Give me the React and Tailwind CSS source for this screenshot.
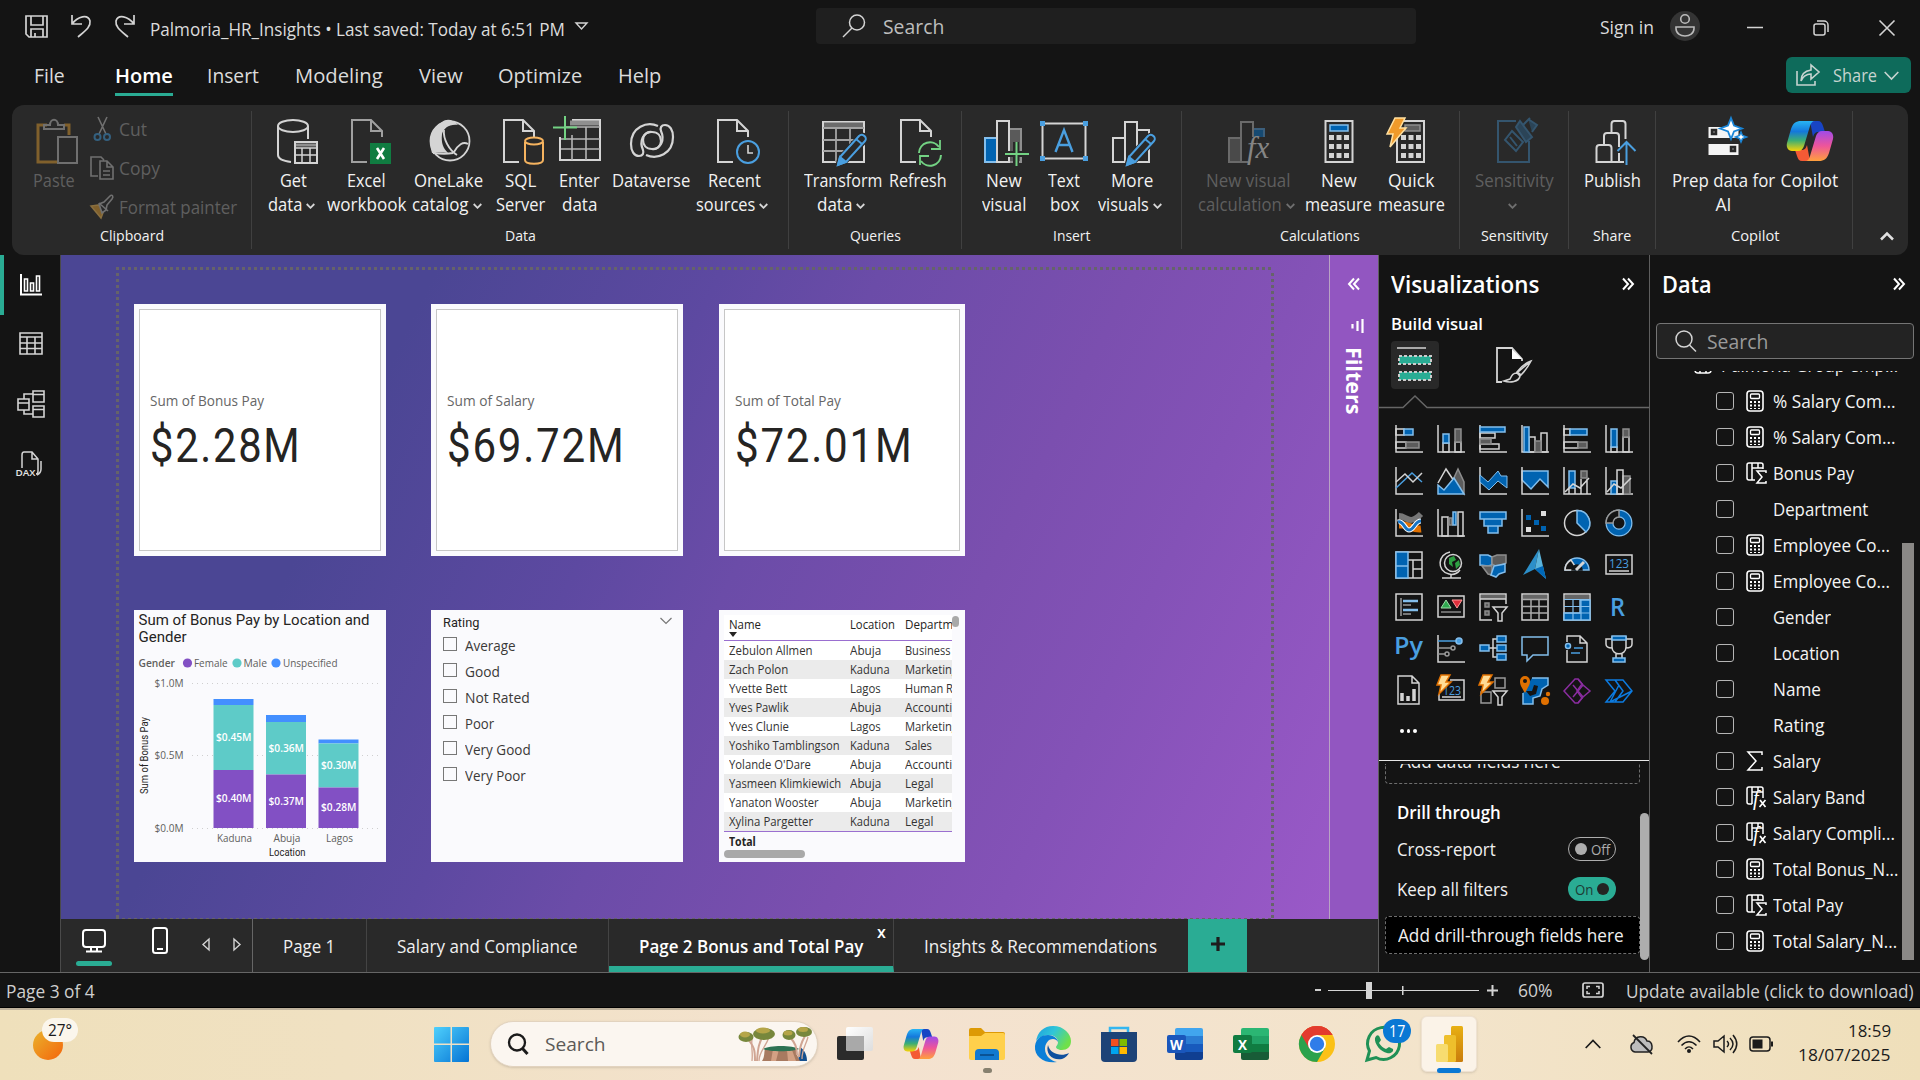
import React, { useLayoutEffect, useRef, useState } from "react";

/* ---------- text fitted to a measure ---------- */
function T({ w, className = "", children }) {
  const ref = useRef(null);
  const [k, setK] = useState(1);
  useLayoutEffect(() => {
    if (w && ref.current) setK(w / ref.current.offsetWidth);
  }, [w, children]);
  return (
    <span className={"block shrink-0 whitespace-nowrap " + className} style={w ? { width: w } : undefined}>
      <span ref={ref} className="inline-block origin-left" style={{ transform: `scaleX(${k})` }}>
        {children}
      </span>
    </span>
  );
}

const L = "#d4d4d4";
const G = "#8f8f8f";
const B = "#0063b1";
const LB = "#83beec";
const SB = "#4a9fe0";
const GR = "#73d283";

function Svg({ w = 48, h = 48, vb, className = "", children }) {
  return (
    <svg width={w} height={h} viewBox={vb || `0 0 ${w} ${h}`} fill="none" stroke={L} strokeWidth="2" className={"block shrink-0 overflow-visible " + className}>
      {children}
    </svg>
  );
}

function Chev({ className = "text-[#d6d6d6]" }) {
  return (
    <svg width="9" height="6" viewBox="0 0 9 6" fill="none" stroke="currentColor" strokeWidth="1.8" className={"mt-1 block shrink-0 " + className}>
      <path d="M.7 1l3.8 3.8L8.3 1" />
    </svg>
  );
}

/* ---------- ribbon icons ---------- */
const Page = ({ x = 8 }) => (
  <g transform={`translate(${x} 0)`}>
    <path d="M15 45H0V3h19l11 11v6" />
    <path d="M19 3v11h11" />
  </g>
);

const CopilotMark = ({ id }) => (
  <g stroke="none">
    <defs>
      <linearGradient id={id + "a"} x1="0" y1="0" x2="0" y2="1">
        <stop offset="0" stopColor="#28b4f4" />
        <stop offset=".35" stopColor="#1478dc" />
        <stop offset=".65" stopColor="#3cae74" />
        <stop offset="1" stopColor="#f7d306" />
      </linearGradient>
      <linearGradient id={id + "b"} x1="0" y1="0" x2="0" y2="1">
        <stop offset="0" stopColor="#a04be8" />
        <stop offset=".5" stopColor="#ee559a" />
        <stop offset="1" stopColor="#ffa03c" />
      </linearGradient>
    </defs>
    <path d="M24 4h8c3 0 4 2 5 5l2 6h-6c-4 0-5 2-6 5z" fill="#1844c4" />
    <path d="M24 44h-8c-3 0-4-2-5-5l-2-6h6c4 0 5-2 6-5z" fill="#f45a35" />
    <path d="M15 4h14c-3 0-4 2-5 5l-6 20c-1 3-3 5-6 5H6c-4 0-6-4-5-8l4-14c2-6 5-8 10-8z" fill={`url(#${id}a)`} />
    <path d="M33 44H19c3 0 4-2 5-5l6-20c1-3 3-5 6-5h6c4 0 6 4 5 8l-4 14c-2 6-5 8-10 8z" fill={`url(#${id}b)`} />
  </g>
);

const Pencil = () => (
  <g>
    <path d="M21 41L41 19c3-3 8 1 5 5L26 45l-7 3z" fill="#292929" stroke="#292929" strokeWidth="5" />
    <path d="M21 40L40 19c3-3 9 1 6 5L27 45l-8 3z" stroke={SB} fill="#292929" />
    <path d="M21 40l6 5-8 3zM37 22l6 5" stroke={SB} fill={SB} />
  </g>
);

const Swirl = () => (
  <path d="M31 9C20 4 4 10 4 27c0 7 3 12 8 12 4 0 5-3 4-6-4-9 0-18 9-18 6 0 9 4 9 9s-4 9-9 8" strokeWidth="2.2" />
);

const icons = {
  getData: (
    <Svg>
      <ellipse cx="23" cy="9" rx="15" ry="6" />
      <path d="M8 9v29c0 4 5 6 13 7M38 9v13" />
      <path d="M25 25h22v21H25z" />
      <path d="M26 28h20" stroke={G} strokeWidth="3" />
      <path d="M25 31h22M25 38h22M32 31v15M40 31v15" strokeWidth="1.5" />
    </Svg>
  ),
  excel: (
    <Svg>
      <g stroke="#a0a0a0"><Page x={9} /></g>
      <path d="M27 26h21v21H27z" fill="#107c41" stroke="none" />
      <path d="M34 31l7 11M41 31l-7 11" stroke="#fff" strokeWidth="2.6" />
    </Svg>
  ),
  onelake: (
    <Svg>
      <circle cx="25" cy="24" r="19.5" strokeWidth="1.8" />
      <path d="M17 5c5-4 12-2 16 3-9-1-14 3-16 9-1 9 1 14 6 19-9-1-16 0-16 0C3 23 6 11 17 5z" fill={L} stroke="none" />
      <path d="M19 13c-1 9 5 20 13 25M29 35c4-7 9-11 14-8M8 36c8 1 15 1 20 0" strokeWidth="1.8" />
    </Svg>
  ),
  sql: (
    <Svg>
      <Page x={8} />
      <path d="M29 25v18c0 5 18 5 18 0V25" stroke="#f5b35f" fill="#292929" />
      <ellipse cx="38" cy="24" rx="9" ry="3.6" stroke="#f5b35f" fill="#292929" />
    </Svg>
  ),
  enter: (
    <Svg>
      <path d="M4 20v23h40V3H16" />
      <path d="M14 6h29" stroke={G} strokeWidth="5" />
      <path d="M5 22h39M5 32h39M16 18v25M30 10v33M10 10h34" stroke="#b4b4b4" strokeWidth="1.6" />
      <path d="M9-1v24M-3 10.5h24" stroke={GR} />
    </Svg>
  ),
  dataverse: (
    <Svg>
      <Swirl />
      <g transform="rotate(180 25 23.5)"><Swirl /></g>
    </Svg>
  ),
  recent: (
    <Svg>
      <Page x={8} />
      <circle cx="38" cy="35" r="11" stroke={SB} fill="#292929" />
      <path d="M38 28v8h5" stroke={L} strokeWidth="1.6" />
    </Svg>
  ),
  transform: (
    <Svg>
      <path d="M4 5h41v40H4z" />
      <path d="M5 8h39" stroke="#6b6b6b" strokeWidth="5" />
      <path d="M4 11h41M17 11v34M31 11v26M4 23h38M4 34h24" stroke="#a3a3a3" strokeWidth="1.8" />
      <Pencil />
    </Svg>
  ),
  refresh: (
    <Svg>
      <Page x={7} />
      <g stroke={GR}>
        <path d="M25 36a11 11 0 0 1 20-6M47 38a11 11 0 0 1-20 6" />
        <path d="M46 23v9h-9M26 48v-9h9" strokeWidth="1.8" />
      </g>
    </Svg>
  ),
  newVisual: (
    <Svg>
      <path d="M29 12h12v33H29z" fill="#5a5a5a" stroke={G} />
      <path d="M5 21h12v24H5z" fill={B} stroke={LB} />
      <path d="M17 4h12v41H17z" fill="#292929" />
      <path d="M36 25v24M25 37h24" stroke="#292929" strokeWidth="6" />
      <path d="M36.500 25v24M25 37h24" stroke={GR} />
    </Svg>
  ),
  textBox: (
    <Svg>
      <path d="M2.500 6.500h43v35h-43z" />
      <g fill={SB} stroke="none">
        <path d="M0 4h5v5H0zM43 4h5v5h-5zM0 39h5v5H0zM43 39h5v5h-5z" />
      </g>
      <path d="M15.500 35L24 13l8.500 22M18.500 28h11" stroke={SB} strokeWidth="2.4" />
    </Svg>
  ),
  moreVisuals: (
    <Svg>
      <path d="M5 21h12v24H5zM17 5h12v40H17zM29 13h12v32H29z" />
      <Pencil />
    </Svg>
  ),
  visualCalc: (
    <Svg>
      <path d="M29 12h11v12H29z" fill="#164a72" stroke="#3c5f7c" />
      <path d="M5 21h12v24H5z" fill="#4a4a4a" stroke="#6a6a6a" />
      <path d="M17 5h12v40H17z" fill="#292929" stroke="#6a6a6a" />
      <path d="M24 20h20v28H24z" fill="#292929" stroke="none" />
      <text x="23" y="41" fill="#858585" stroke="none" fontSize="31" fontStyle="italic" fontFamily="Liberation Serif">fx</text>
    </Svg>
  ),
  newMeasure: (
    <Svg>
      <path d="M10.500 4h27v41h-27z" />
      <path d="M15 8h18v6H15z" fill={B} stroke={LB} strokeWidth="1.500" />
      <g fill={L} stroke="none">
        <path d="M14 18h5v5h-5zM21.500 18h5v5h-5zM29 18h5v5h-5zM14 27h5v5h-5zM21.500 27h5v5h-5zM29 27h5v5h-5zM14 36h5v5h-5zM21.500 36h5v5h-5zM29 36h5v5h-5z" />
      </g>
    </Svg>
  ),
  quickMeasure: (
    <Svg>
      <path d="M10 4h27v41H10z" />
      <path d="M18 8h15v6H18z" fill="#5f5f5f" stroke={G} strokeWidth="1.500" />
      <g fill={L} stroke="none">
        <path d="M14 18h5v5h-5zM21.500 18h5v5h-5zM29 18h5v5h-5zM14 27h5v5h-5zM21.500 27h5v5h-5zM29 27h5v5h-5zM14 36h5v5h-5zM21.500 36h5v5h-5zM29 36h5v5h-5z" />
      </g>
      <path d="M8 1h10l-5 10h6L3 30l3-13H0z" fill="#f09a2a" stroke="#ffe0a0" strokeWidth="1.500" />
    </Svg>
  ),
  sensitivity: (
    <Svg>
      <g stroke="#34556e">
        <path d="M26 4H8v41h31V24" />
        <path d="M22 14l11 11-7 9-11-11zM20 20l7 9" />
        <path d="M30 4l12 16-6 5-10-15zM38 2l9 6-5 7M33 8l7-7" fill="#2b4457" />
      </g>
    </Svg>
  ),
  publish: (
    <Svg>
      <path d="M8.500 31a3 3 0 0 1 3-3h9a3 3 0 0 1 3 3v14h-15zM16 28V19a3 3 0 0 1 3-3h9a3 3 0 0 1 3 3v11M23.500 16V7a3 3 0 0 1 3-3h8a3 3 0 0 1 3 3v15M23 45h13M31 36v9" />
      <path d="M38.500 48V26M29.500 34l9-9 9 9" stroke={SB} />
    </Svg>
  ),
  prep: (
    <Svg>
      <path d="M8.500 10h30v11h-30zM8.500 27h30v11h-30z" fill="#f4f4f4" stroke="none" />
      <path d="M12 13h4v4h-4zM31 30h4v4h-4z" stroke="#292929" strokeWidth="2.5" fill="#888" />
      <path d="M31 1l3 7.500 8 3-8 3-3 7.500-3-7.500-8-3 8-3z" fill="#fff" stroke="#1a86d8" strokeWidth="1.800" />
      <path d="M41 15l1.500 3.500 4 1.500-4 1.500L41 25l-1.500-3.500-4-1.500 4-1.500z" fill="#fff" stroke="#1a86d8" strokeWidth="1.500" />
    </Svg>
  ),
  copilot: (
    <Svg>
      <CopilotMark id="rc" />
    </Svg>
  ),
};

const groups = [
  { name: "Data", nw: 31, box: "w-[537px] pl-[10px]", nudge: "-translate-x-[5px]", items: [
    { i: "getData", c: "w-[63px]", a: ["Get", 27], b: ["data", 34], v: 1 },
    { i: "excel", c: "w-[83px]", a: ["Excel", 39], b: ["workbook", 79] },
    { i: "onelake", c: "w-[81px]", a: ["OneLake", 69], b: ["catalog", 57], v: 1 },
    { i: "sql", c: "w-[62px]", a: ["SQL", 31], b: ["Server", 49] },
    { i: "enter", c: "w-[57px]", a: ["Enter", 41], b: ["data", 35] },
    { i: "dataverse", c: "w-[86px]", a: ["Dataverse", 78] },
    { i: "recent", c: "w-[80px]", a: ["Recent", 53], b: ["sources", 59], v: 1 },
  ] },
  { name: "Queries", nw: 51, box: "w-[173px] pl-[10px]", nudge: "-translate-x-[5px]", items: [
    { i: "transform", c: "w-[88px]", a: ["Transform", 78], b: ["data", 35], v: 1 },
    { i: "refresh", c: "w-[61px]", a: ["Refresh", 58] },
  ] },
  { name: "Insert", nw: 37, box: "w-[220px] pl-[12px]", nudge: "-translate-x-1.5", items: [
    { i: "newVisual", c: "w-[60px]", a: ["New", 36], b: ["visual", 44] },
    { i: "textBox", c: "w-[60px]", a: ["Text", 32], b: ["box", 29] },
    { i: "moreVisuals", c: "w-[76px]", a: ["More", 42], b: ["visuals", 51], v: 1 },
  ] },
  { name: "Calculations", nw: 80, box: "w-[278px] pl-[13px]", nudge: "-translate-x-[7px]", items: [
    { i: "visualCalc", c: "w-[106px] text-[#5f5f5f]", a: ["New visual", 84], b: ["calculation", 84], v: 1, dim: 1 },
    { i: "newMeasure", c: "w-[75px]", a: ["New", 36], b: ["measure", 67] },
    { i: "quickMeasure", c: "w-[70px]", a: ["Quick", 46], b: ["measure", 67] },
  ] },
  { name: "Sensitivity", nw: 67, box: "w-[109px]", nudge: "", items: [
    { i: "sensitivity", c: "w-[108px] text-[#5f5f5f]", a: ["Sensitivity", 79], v: 1, dim: 1 },
  ] },
  { name: "Share", nw: 38, box: "w-[87px]", nudge: "", items: [{ i: "publish", c: "w-[86px]", a: ["Publish", 57] }] },
  { name: "Copilot", nw: 49, box: "w-[197px] pl-[14px]", nudge: "-translate-x-1.5", items: [
    { i: "prep", c: "w-[107px]", a: ["Prep data for", 103], b: ["AI", 16] },
    { i: "copilot", c: "w-[65px]", a: ["Copilot", 58] },
  ] },
];

function Ribbon() {
  return (
    <div className="mx-3 flex h-[150px] rounded-xl bg-[#292929] py-1.5 text-[17.500px] leading-6 text-[#f2f2f2]">
      <div className="flex w-[240px] shrink-0 flex-col border-r border-[#404040]">
        <div className="flex h-[112px] text-[#5f5f5f]">
          <div className="ml-[21px] flex w-[44px] flex-col pt-1.5">
            <Svg className="ml-1">
              <path d="M10 6H1v37h20M27 6h5v10" stroke="#80602c" strokeWidth="3" transform="translate(0 2)" />
              <path d="M7 12V8h6c0-7 8-7 8 0h6v4z" stroke="#707070" />
              <path d="M21 20h19v26H21z" stroke="#707070" />
            </Svg>
            <T w={42} className="mt-[3px]">Paste</T>
          </div>
          <div className="ml-[13px] flex flex-col gap-[15px] pt-1.5">
            <div className="flex h-6 items-center gap-[5px]">
              <Svg w={24} h={24}>
                <path d="M8 0l8 17M17 0L9 17" stroke="#707070" strokeWidth="1.600" />
                <circle cx="7.500" cy="20" r="3" stroke="#34607f" /><circle cx="17" cy="20" r="3" stroke="#34607f" />
              </Svg>
              <T w={28}>Cut</T>
            </div>
            <div className="flex h-6 items-center gap-[5px]">
              <Svg w={24} h={24}>
                <g stroke="#707070" strokeWidth="1.600"><path d="M8 20H1V1h10l3 3M10 5h7l6 6v12H10zM17 5v6h6M13 15h7M13 19h7" /></g>
              </Svg>
              <T w={41}>Copy</T>
            </div>
            <div className="flex h-6 items-center gap-[5px]">
              <Svg w={24} h={24}>
                <path d="M1 11l10 12 3-8-6-5z" fill="#80602c" stroke="#8a7040" strokeWidth="1.500" />
                <path d="M9 8l9 8M9 9l5-2 6-6c2-2 4 0 2 3l-5 6-1 5-4 3z" stroke="#707070" strokeWidth="1.600" fill="#292929" />
              </Svg>
              <T w={118}>Format painter</T>
            </div>
          </div>
        </div>
        <T w={64} className="mx-auto text-[15px]">Clipboard</T>
      </div>
      {groups.map((g) => (
        <div key={g.name} className={"flex shrink-0 flex-col border-r border-[#404040] " + g.box}>
          <div className="flex h-[112px] pt-1.5">
            {g.items.map((t) => (
              <div key={t.i} className={"flex shrink-0 flex-col items-center " + t.c}>
                {icons[t.i]}
                <T w={t.a[1]} className="mt-[3px]">{t.a[0]}</T>
                <div className={"flex h-6 items-center gap-1 " + (t.v ? "mr-[4px]" : "")}>
                  {t.b && <T w={t.b[1]}>{t.b[0]}</T>}
                  {t.v && <Chev className={t.dim ? "text-[#6f6f6f]" : "text-[#d6d6d6]"} />}
                </div>
              </div>
            ))}
          </div>
          <T w={g.nw} className={"mx-auto text-[15px] " + g.nudge}>{g.name}</T>
        </div>
      ))}
      <div className="flex flex-1 items-end justify-center pb-2">
        <svg width="16" height="10" viewBox="0 0 16 10" fill="none" stroke="#e0e0e0" strokeWidth="2.500" className="ml-3"><path d="M2 8.500l6-6 6 6" /></svg>
      </div>
    </div>
  );
}

function TitleBar() {
  return (
    <div className="flex h-[52px] text-[17.500px] leading-[58px] text-[#dcdcdc]">
      <div className="flex h-[52px] w-[816px] shrink-0 items-center pl-[25px]">
        <Svg w={23} h={23} className=""><path d="M1 1h21v21H4l-3-3zM6 1v9h12V1M6 22v-8h12v8M10 22v-4" strokeWidth="1.700" /></Svg>
        <Svg w={22} h={24} className="ml-[22px]"><path d="M2 1v9h10M2 10C8 2 18 0 20 7c1 6-5 10-12 16" strokeWidth="1.700" /></Svg>
        <Svg w={22} h={24} className="ml-[22px]"><path d="M20 1v9H10M20 10C14 2 4 0 2 7c-1 6 5 10 12 16" strokeWidth="1.700" /></Svg>
        <T w={415} className="ml-[14px] mt-1.5">Palmoria_HR_Insights • Last saved: Today at 6:51 PM</T>
        <Svg w={13} h={8} className="ml-[10px]"><path d="M1 1h11L6.500 7z" strokeWidth="1.400" /></Svg>
      </div>
      <div className="mt-2 flex h-9 w-[600px] shrink-0 items-center rounded bg-[#1f1f1f] pl-[26px] text-xl text-[#bdbdbd]">
        <Svg w={24} h={24}><circle cx="15" cy="8.500" r="7.500" strokeWidth="1.500" /><path d="M10 14L1 23" strokeWidth="1.500" /></Svg>
        <T w={61} className="ml-[17px] mt-0.5">Search</T>
      </div>
      <div className="flex h-[52px] items-center">
        <T w={54} className="ml-[184px] mt-0.5">Sign in</T>
        <div className="ml-4 flex size-[30px] items-center justify-center rounded-full bg-[#343434]">
          <Svg w={20} h={24}><circle cx="10" cy="5" r="4.300" strokeWidth="1.600" stroke="#bbb" /><path d="M1 13h18v1.500c0 10-18 10-18 0z" stroke="#bbb" strokeWidth="1.600" /></Svg>
        </div>
        <Svg w={16} h={16} className="ml-[47px] mt-1"><path d="M0 7.500h16" strokeWidth="1.500" /></Svg>
        <Svg w={16} h={16} className="ml-[50px] mt-1"><path d="M1 6a2 2 0 0 1 2-2h7a2 2 0 0 1 2 2v7a2 2 0 0 1-2 2H3a2 2 0 0 1-2-2zM4 1h7a4 4 0 0 1 4 4v7" strokeWidth="1.500" /></Svg>
        <Svg w={16} h={16} className="ml-[50px] mt-1"><path d="M.5.5l15 15M15.500.5l-15 15" strokeWidth="1.600" /></Svg>
      </div>
    </div>
  );
}

function Menu() {
  return (
    <div className="flex h-[53px] text-xl leading-[48px] text-[#dcdcdc]">
      <T w={31} className="ml-[34px]">File</T>
      <div className="ml-[50px] h-[44px] border-b-[3px] border-[#2aac94]">
        <T w={58} className="font-semibold text-white">Home</T>
      </div>
      <T w={52} className="ml-[34px]">Insert</T>
      <T w={88} className="ml-[36px]">Modeling</T>
      <T w={44} className="ml-[36px]">View</T>
      <T w={84} className="ml-[35px]">Optimize</T>
      <T w={43} className="ml-[36px]">Help</T>
      <div className="ml-auto mr-[9px] mt-[5px] flex h-9 w-[125px] items-center rounded-md bg-[#0e6b5b] pl-2.5 text-[17.500px] text-[#c6d4d0]">
        <Svg w={24} h={22} className="text-white"><path d="M1 7v14h18v-4M15 6V1l8 7-8 7v-5c-5 0-8 2-10 7 0-6 3-10 10-11z" strokeWidth="1.600" stroke="#c6d4d0" /></Svg>
        <T w={44} className="ml-[13px]">Share</T>
        <Svg w={15} h={9} className="ml-[7px]"><path d="M.7 1l6.800 7L14.300 1" strokeWidth="1.600" stroke="#c6d4d0" /></Svg>
      </div>
    </div>
  );
}

function Rail() {
  return (
    <div className="w-[61px] shrink-0 border-r border-[#4a4a4a]">
      <div className="flex h-[60px] items-center border-l-4 border-[#2aac94] pl-4">
        <Svg w={22} h={22} ><path d="M1 0v20.500h21" stroke="#fff" /><path d="M4.500 5h3v12h-3zM10.500 9h3v8h-3zM16.500 2h3v15h-3z" strokeWidth="1.600" stroke="#fff" /></Svg>
      </div>
      <Svg w={24} h={24} className="ml-[19px] mt-[17px]"><path d="M1 1h22v21H1zM1 5h22M1 11h22M1 16.500h22M8 5v17M16 5v17" strokeWidth="1.600" /></Svg>
      <Svg w={28} h={28} className="ml-[17px] mt-[34px]"><path d="M1 9h11v11H1zM1 13h11M16 1h11v11H16zM16 4.500h11M16 16h11v11H16zM16 19.500h11M7 9V4h9M7 20v4h9" strokeWidth="1.600" /></Svg>
      <Svg w={27} h={26} className="ml-[16px] mt-[33px]">
        <path d="M6 17V4c0-2 1-3 2-3h8l6 7v12c0 2-1 3-2 3M16 1v7h6M25 10v8c0 3-2 5-4 6" strokeWidth="1.500" />
        <text x="-0.500" y="25" fill="#e4e4e4" stroke="none" fontSize="9.500" fontWeight="600" textLength="20" lengthAdjust="spacingAndGlyphs">DAX</text>
      </Svg>
    </div>
  );
}

function Card({ label, lw, value, vw }) {
  return (
    <div className="h-[252px] bg-[#fafafd] p-[5px]">
      <div className="h-full border border-[#c6c6c6] bg-white pl-[10px] pt-[81px]">
        <T w={lw} className="text-[14.500px] leading-5 text-[#666]">{label}</T>
        <T w={vw} className="mt-2 font-[Roboto] text-[48px] leading-[54px] tracking-[2px] text-[#252423]">{value}</T>
      </div>
    </div>
  );
}

const bars = [
  { n: "Kaduna", x: 79.5, t: [89, 95, 160], up: "$0.45M", lo: "$0.40M", uy: 128, ly: 189, w: 35 },
  { n: "Abuja", x: 132, t: [105, 112, 164.5], up: "$0.36M", lo: "$0.37M", uy: 139, ly: 192, w: 27 },
  { n: "Lagos", x: 184.5, t: [129.5, 133.5, 177.5], up: "$0.30M", lo: "$0.28M", uy: 156, ly: 198, w: 27 },
];

function Chart() {
  const st = { textLength: 0, lengthAdjust: "spacingAndGlyphs" };
  return (
    <div className="h-[252px] bg-[#fafafd]">
      <svg width="252" height="252" viewBox="0 0 252 252" className="block" fontSize="11.500" fill="#605e5c">
        <g className="font-[Roboto]" fill="#252423" fontSize="15">
          <text x="4.500" y="15" {...st} textLength="231">Sum of Bonus Pay by Location and</text>
          <text x="4.500" y="32" {...st} textLength="48">Gender</text>
          <text x="135" y="246" fontSize="10.500" {...st} textLength="36.500">Location</text>
          <text transform="translate(14 184) rotate(-90)" fontSize="10.500" {...st} textLength="77">Sum of Bonus Pay</text>
        </g>
        <text x="4.500" y="57" fontWeight="600" {...st} textLength="36.500">Gender</text>
        <circle cx="53.500" cy="53" r="4.600" fill="#8250c4" />
        <text x="60" y="57" {...st} textLength="33.500">Female</text>
        <circle cx="103" cy="53" r="4.600" fill="#5ecbc8" />
        <text x="109.500" y="57" {...st} textLength="23.500">Male</text>
        <circle cx="142" cy="53" r="4.600" fill="#438fff" />
        <text x="149" y="57" {...st} textLength="54.500">Unspecified</text>
        <text x="20.500" y="77" {...st} textLength="29">$1.0M</text>
        <text x="20.500" y="149" {...st} textLength="29">$0.5M</text>
        <text x="20.500" y="221.500" {...st} textLength="29">$0.0M</text>
        <path d="M58 73.500h187M58 145.500h187M58 218.500h187" stroke="#cfcfcf" strokeWidth="1" strokeDasharray="1 4" />
        {bars.map((b) => (
          <g key={b.n}>
            <rect x={b.x} y={b.t[0]} width="40" height={b.t[1] - b.t[0]} fill="#438fff" />
            <rect x={b.x} y={b.t[1]} width="40" height={b.t[2] - b.t[1]} fill="#5ecbc8" />
            <rect x={b.x} y={b.t[2]} width="40" height={218 - b.t[2]} fill="#8250c4" />
            <g fill="#fff" fontWeight="600" fontSize="11">
              <text x={b.x + 2.5} y={b.uy + 3} {...st} textLength="35.500">{b.up}</text>
              <text x={b.x + 2.5} y={b.ly + 3} {...st} textLength="35.500">{b.lo}</text>
            </g>
            <text x={b.x + 21 - b.w / 2} y="232" {...st} textLength={b.w}>{b.n}</text>
          </g>
        ))}
      </svg>
    </div>
  );
}

const ratings = [["Average", 51], ["Good", 35], ["Not Rated", 65], ["Poor", 29], ["Very Good", 66], ["Very Poor", 61]];

function Slicer() {
  return (
    <div className="h-[252px] bg-[#fafafd] pl-3 text-[#3a3938]">
      <div className="flex h-[27px] items-center justify-between pr-[11px]">
        <T w={36} className="-mt-[3px] font-[Roboto] text-[13.500px] text-[#252423]">Rating</T>
        <Svg w={12} h={8} className="-mt-1.5"><path d="M.5 1L6 6.500 11.500 1" stroke="#777" strokeWidth="1.200" /></Svg>
      </div>
      {ratings.map(([n, w]) => (
        <div key={n} className="mb-0.5 flex h-6 items-center gap-[8px] text-[14.500px]">
          <div className="-mt-2.5 size-[14px] border border-[#777]" />
          <T w={w} className="-mt-1.5">{n}</T>
        </div>
      ))}
    </div>
  );
}

const people = [
  ["Zebulon Allmen", 84, "Abuja", 31, "Business", 45],
  ["Zach Polon", 59, "Kaduna", 40, "Marketing", 53],
  ["Yvette Bett", 58, "Lagos", 31, "Human Resources", 94],
  ["Yves Pawlik", 60, "Abuja", 31, "Accounting", 61],
  ["Yves Clunie", 60, "Lagos", 31, "Marketing", 53],
  ["Yoshiko Tamblingson", 111, "Kaduna", 40, "Sales", 27],
  ["Yolande O'Dare", 82, "Abuja", 31, "Accounting", 61],
  ["Yasmeen Klimkiewich", 112, "Abuja", 31, "Legal", 28],
  ["Yanaton Wooster", 90, "Abuja", 31, "Marketing", 53],
  ["Xylina Pargetter", 84, "Kaduna", 40, "Legal", 28],
];

function TableCard() {
  return (
    <div className="flex h-[252px] bg-[#fafafd] pl-[5px] pt-[5px] text-[12.500px] text-[#333]">
      <div className="w-[228px] overflow-hidden">
        <div className="h-[26px] border-b border-[#9a6fd0] bg-white pl-[5px] text-[#252423]">
          <div className="flex h-[20px] items-center">
            <T w={32} className="mr-[89px]">Name</T>
            <T w={45} className="mr-[10px]">Location</T>
            <T w={66}>Department</T>
          </div>
          <svg width="8" height="5" className="-mt-[3px] block"><path d="M0 0h8L4 5z" fill="#252423" /></svg>
        </div>
        {people.map((p, i) => (
          <div key={p[0]} className={"flex h-[19px] items-center pl-[5px] pt-px " + (i % 2 ? "bg-[#ebebeb]" : "bg-white")}>
            <div className="w-[121px] shrink-0"><T w={p[1]}>{p[0]}</T></div>
            <div className="w-[55px] shrink-0"><T w={p[3]}>{p[2]}</T></div>
            <T w={p[5]}>{p[4]}</T>
          </div>
        ))}
        <div className="h-[19px] border-t border-[#9a6fd0] pl-[5px] leading-5"><T w={27} className="font-bold text-[#252423]">Total</T></div>
        <div className="h-2 w-[81px] rounded-full bg-[#a9a9a9]" />
      </div>
      <div className="mt-px h-[11px] w-[7px] rounded-full bg-[#a9a9a9]" />
    </div>
  );
}

function Canvas() {
  return (
    <div className="flex h-[664px]">
      <div className="flex w-[1269px] shrink-0 flex-col overflow-hidden border-r border-[#b9a3c4] bg-[linear-gradient(116deg,#4b4694_0%,#4b4694_24%,#5d49a1_42%,#6b4ca8_52%,#7b4faf_68%,#8452b7_79%,#9a59c8_100%)]">
        <div className="ml-[55px] mt-[12px] flex h-[652px] w-[1158px] flex-col">
          <div className="h-[3px] shrink-0 bg-[repeating-linear-gradient(90deg,#66636a_0_3px,transparent_3px_6px)]" />
          <div className="flex h-[648px] shrink-0">
            <div className="w-[3px] shrink-0 bg-[repeating-linear-gradient(0deg,#66636a_0_3px,transparent_3px_6px)]" />
            <div className="ml-[15px] mt-[34px] grid h-[559px] w-[1137px] grid-cols-[252px_252px_246px] grid-rows-[252px_252px] content-start gap-y-[54px]">
              <Card label="Sum of Bonus Pay" lw={114} value="$2.28M" vw={151} />
              <div className="-mr-[45px] ml-[45px]"><Card label="Sum of Salary" lw={87} value="$69.72M" vw={178} /></div>
              <div className="-mr-[81px] ml-[81px]"><Card label="Sum of Total Pay" lw={106} value="$72.01M" vw={178} /></div>
              <Chart />
              <div className="-mr-[45px] ml-[45px]"><Slicer /></div>
              <div className="-mr-[81px] ml-[81px]"><TableCard /></div>
            </div>
            <div className="w-[3px] shrink-0 bg-[repeating-linear-gradient(0deg,#66636a_0_3px,transparent_3px_6px)]" />
          </div>
          <div className="h-px shrink-0 bg-[repeating-linear-gradient(90deg,#66636a_0_3px,transparent_3px_6px)]" />
        </div>
      </div>
      <div className="flex w-[48px] flex-col items-center bg-[#9256c1] pt-[23px] text-white">
        <Svg w={12} h={12}><path d="M6 .5L1 6l5 5.500M11 .5L6 6l5 5.500" stroke="#fff" strokeWidth="2" /></Svg>
        <Svg w={14} h={14} className="ml-1.5 mt-[29px]"><path d="M12.500 0v14M7.500 2v10M2.500 5v4.500" stroke="#fff" strokeWidth="2.200" /></Svg>
        <div className="mt-[14px] w-6 text-[21.500px] font-bold leading-6 [writing-mode:vertical-rl]">Filters</div>
      </div>
    </div>
  );
}

function TabBar() {
  return (
    <div className="flex h-[53px] bg-[#292929] text-[17.500px] leading-[54px] text-[#f0f0f0]">
      <div className="flex w-[192px] shrink-0 items-start border-r border-[#666]">
        <div className="ml-[15px] mt-[10px] flex w-9 flex-col items-center">
          <Svg w={24} h={24}><rect x="1" y="1" width="22" height="17" rx="3" stroke="#fff" /><path d="M9 19v3M15 19v3M4 22.500h16" stroke="#fff" /></Svg>
          <div className="mt-2 h-[5px] w-9 rounded-full bg-[#2aac94]" />
        </div>
        <Svg w={16} h={27} className="ml-[40px] mt-2"><rect x="1" y="1" width="14" height="25" rx="2.500" stroke="#fff" /><path d="M5 22h6" stroke="#fff" /></Svg>
        <Svg w={8} h={13} className="ml-[34px] mt-[19px]"><path d="M7 1v11L1 6.500z" strokeWidth="1.400" /></Svg>
        <Svg w={8} h={13} className="ml-[23px] mt-[19px]"><path d="M1 1v11l6-5.500z" strokeWidth="1.400" /></Svg>
      </div>
      <div className="flex w-[114px] shrink-0 border-r border-[#444] pl-[30px]"><T w={52}>Page 1</T></div>
      <div className="flex w-[242px] shrink-0 border-r border-[#444] pl-[30px]"><T w={181}>Salary and Compliance</T></div>
      <div className="flex w-[285px] shrink-0 border-b-[6px] border-r border-b-[#2aac94] border-r-[#444] pl-[30px] font-semibold text-white">
        <T w={224}>Page 2 Bonus and Total Pay</T>
        <T w={9} className="ml-[14px] h-6 text-base leading-[26px]">x</T>
      </div>
      <div className="flex w-[294px] shrink-0 pl-[30px]"><T w={233}>Insights &amp; Recommendations</T></div>
      <div className="flex w-[59px] items-center justify-center bg-[#2aac94]">
        <Svg w={14} h={14} className="-mt-1"><path d="M7 0v14M0 7h14" stroke="#1d1d1d" strokeWidth="3.200" /></Svg>
      </div>
    </div>
  );
}

/* ---------- visual gallery ---------- */
const Ax = () => <path d="M1 0v27h27" strokeWidth="1.500" />;
const bl = { fill: B, stroke: LB };
const gy = { fill: "#5c5c5c", stroke: "#8d8d8d" };
const Bolt = () => <path d="M4-2h9L9 5h5L2 17l2-9H0z" fill="#ffdc96" stroke="#e07000" strokeWidth="1.500" />;
const Funnel = () => <path d="M14 14h14l-5 6v8h-4v-8z" fill="#141414" />;
const gallery = [
  <><Ax /><path d="M1 4h8v6H1zM1 17h10v6H1z" /><path d="M9 4h9v6H9z" {...bl} /><path d="M11 17h13v6H11z" {...gy} /></>,
  <><Ax /><path d="M6 18h6v9H6zM18 17h6v10h-6z" /><path d="M6 9h6v9H6z" {...bl} /><path d="M18 4h6v13h-6z" {...gy} /></>,
  <><Ax /><path d="M1 8h15v5H1zM1 19h19v5H1z" /><path d="M1 14h11v5H1z" {...gy} /><path d="M1 2h25v5H1z" {...bl} /></>,
  <><Ax /><path d="M8 12h6v15H8zM20 8h6v19h-6z" /><path d="M14 16h6v11h-6z" {...gy} /><path d="M3 2h5v25H3z" {...bl} /></>,
  <><Ax /><path d="M1 4h6v6H1zM1 17h14v6H1z" /><path d="M7 4h17v6H7z" {...bl} /><path d="M15 17h9v6h-9z" {...gy} /></>,
  <><Ax /><path d="M6 22h6v5H6zM18 12h6v15h-6z" /><path d="M6 4h6v18H6z" {...bl} /><path d="M18 4h6v8h-6z" {...gy} /></>,
  <><Ax /><path d="M1 21L17 6l10 9" stroke={SB} /><path d="M1 15L10 7l8 8 9-9" /></>,
  <><path d="M15 15l6-13 6 13v12z" {...gy} /><path d="M1 16L9 2l8 12" /><path d="M1 27V18l6 5L17 11l10 16z" {...bl} /></>,
  <><Ax /><path d="M1 8l8 7L19 4l3 5h6v12l-9-7-9 9-9-8z" {...bl} strokeWidth="1" /></>,
  <><path d="M1 4h26v16l-8-8-9 10-9-9z" {...bl} /><Ax /></>,
  <><Ax /><path d="M6 4h6v17H6z" {...bl} /><path d="M18 4h6v7h-6z" {...gy} /><path d="M6 21v6M12 21v6M18 12v15M24 12v15M2 25l8-8 7 4 9-10" /></>,
  <><Ax /><path d="M6 14h6v13H6z" {...bl} /><path d="M18 9h7v18h-7z" {...gy} /><path d="M12 3h6v24h-6z" /><path d="M2 25l7-8 7 4 10-10" /></>,
  <><Ax /><path d="M4 16h6c4 0 8 5 16 4" stroke="#e07000" strokeWidth="7" /><path d="M4 7c8 0 10 10 22-2" stroke="#777" strokeWidth="6" /><path d="M3 13c5-2 7 8 11 8 5 0 6-9 12-9" stroke="#fff" strokeWidth="5" /><path d="M3 13c5-2 7 8 11 8 5 0 6-9 12-9" stroke="#1674c4" strokeWidth="3" /></>,
  <><Ax /><path d="M5 8h6v19H5zM21 3h5v24h-5z" /><path d="M12 9h3v7h-3z" {...gy} /><path d="M16 3h3v13h-3z" {...bl} /></>,
  <><path d="M1 3h26v7H1zM5 10h18v7H5zM9 17h10v7H9z" {...bl} /></>,
  <><Ax /><g stroke="none"><path d="M5 6h5v5H5zM13 11h5v5h-5zM20 17h5v5h-5z" fill={B} /><path d="M20 2h5v5h-5zM5 18h5v5H5z" fill="#ddd" /></g></>,
  <><circle cx="14" cy="14" r="12.500" /><path d="M14 1.500a12.500 12.500 0 0 1 9 21.500l-9-9z" {...bl} /></>,
  <><circle cx="14" cy="14" r="9.500" stroke={LB} strokeWidth="8" /><circle cx="14" cy="14" r="9.500" stroke={B} strokeWidth="5.500" /><path d="M1 14A13 13 0 0 1 14 1v7a6 6 0 0 0-6 6z" fill="#141414" stroke="#999" /></>,
  <><path d="M1 1h26v26H1zM13 9h14M18 9v18M18 18h9" /><path d="M1 1h12v14H1zM1 15h12v12H1z" {...bl} /></>,
  <><circle cx="16" cy="12" r="8.500" /><path d="M12 7l5-2 2 4-4 2 1 5-4-3zM18 12l4-3 1 5-4 4z" fill="#2ea043" stroke="none" /><path d="M13 1C1 3-1 20 12 23c4 1 8 0 11-4M14 24v3M5 27h19" /></>,
  <><path d="M1 4h8l4 2v8l-4 1-8-1z" {...bl} /><path d="M13 6l5-2h9v8l-9 4-5-3zM3 15l10 0v9l-4-1z" {...gy} /><path d="M15 15l11-2v8l-6 2-3 3-5-2z" {...bl} /></>,
  <g stroke="none"><path d="M18-2L2 24l12-6z" fill="#2c8fc9" /><path d="M18-2l-4 20 11 10z" fill="#5bb4dc" /><path d="M14 18l11 10-3-13z" fill="#0068b8" /></g>,
  <><path d="M2 19a12 12 0 0 1 24 0z" fill={B} stroke={LB} /><path d="M2 19A12 12 0 0 1 8 9l4 6-2 4z" fill="#141414" /><path d="M9 19a5 5 0 0 1 10 0z" fill="#141414" stroke="#141414" /><path d="M13 19l8-8" strokeWidth="3" /></>,
  <><path d="M1 4h26v19H1zM4 20h20" /><text x="4" y="17" fill={SB} stroke="none" fontSize="13.500" textLength="20" lengthAdjust="spacingAndGlyphs">123</text></>,
  <><path d="M1 1h26v26H1z" /><path d="M6 5v18M8 12h8M8 21h8" stroke="#999" /><path d="M8 8h15M8 17h15" stroke={LB} strokeWidth="2.500" /></>,
  <><path d="M1 3h26v21H1z" /><path d="M4 19h20" stroke="#888" /><path d="M4 15l5-8 5 8z" fill="#2fa84f" stroke="#9fe0a8" strokeWidth="1" /><path d="M15 7h10l-5 8z" fill="#e0303c" stroke="#ff9a9a" strokeWidth="1" /></>,
  <><path d="M13 27H1V1h26v10" /><path d="M2 4h24" stroke="#666" strokeWidth="4" /><path d="M1 6h26" /><path d="M6 10h4v4H6zM6 18h4v4H6z" {...gy} /><Funnel /></>,
  <><path d="M1 1h26v26H1z" /><path d="M2 4h24" stroke="#666" strokeWidth="4" /><path d="M1 6.500h26M1 13.500h26M1 20h26M10 7v20M18 7v20" stroke="#aaa" /></>,
  <><path d="M1 1h26v26H1z" /><path d="M17 7h10v20H1v-7h16z" fill={B} stroke={LB} /><path d="M2 4h24" stroke="#666" strokeWidth="4" /><path d="M1 6.500h26M1 13.500h26M1 20h26M10 7v20M18 7v20" stroke={LB} strokeWidth="1.200" /></>,
  <text x="5" y="23" fill={SB} stroke="none" fontSize="25" fontWeight="600" textLength="15" lengthAdjust="spacingAndGlyphs">R</text>,
  <text x="-1" y="19" fill={SB} stroke="none" fontSize="24" fontWeight="600" textLength="29" lengthAdjust="spacingAndGlyphs">Py</text>,
  <><Ax /><path d="M1 6h19" stroke={SB} /><circle cx="22" cy="6" r="3" fill={SB} stroke={LB} /><path d="M1 13h13M1 19h7" stroke="#999" /><circle cx="16" cy="13" r="2" stroke="#999" /><circle cx="10" cy="19" r="2" stroke="#999" /></>,
  <><path d="M10 13h8M18 4h-4v18h4" /><path d="M1 10h9v6H1zM18 1h9v6h-9zM18 10h9v6h-9zM18 19h9v6h-9z" {...bl} /></>,
  <path d="M1 2h26v18H12l-6 6v-6H1z" stroke={LB} />,
  <><path d="M4 7V1h13l7 7v19H4V15M17 1v7h7" /><circle cx="5" cy="11" r="2.500" fill={B} stroke={LB} /><path d="M11 13h9M8 18h9" stroke={SB} /></>,
  <><path d="M7 2h14v10c0 9-14 9-14 0zM7 4H1v5c0 3 3 4 6 4M21 4h6v5c0 3-3 4-6 4M11 18v5M17 18v5" /><path d="M7 1h14v4H7zM8 23h12v4H8z" {...bl} /></>,
  <><path d="M3-1h14l7 7v21H3zM17-1v7h7" /><path d="M7 24v-8M13 24v-5M19 24V12" strokeWidth="3.500" /></>,
  <><path d="M13 3h14v20H2v-6M5 20h19" /><text x="6" y="18" fill={SB} stroke="none" fontSize="13" textLength="18" lengthAdjust="spacingAndGlyphs">123</text><Bolt /></>,
  <><path d="M16 1h10v10H16zM2 15h10v11H2z" stroke="#999" /><Funnel /><Bolt /></>,
  <><path d="M11 1h16v7l-6 4-2 7-7 2v6H2V16" fill={B} stroke={LB} /><path d="M5 14h6l2-6 4 1-2 8-6 2z" fill="#141414" stroke="none" /><g fill="#e07000" stroke="none"><path d="M4 16C0 9-1 8-1 4a5 5 0 0 1 10 0c0 4-2 6-5 12z" /><circle cx="24" cy="24" r="4" /><circle cx="27" cy="17" r="2.200" /></g><circle cx="4" cy="4" r="2" fill="#141414" stroke="none" /></>,
  <g stroke="#8a2da0" strokeWidth="1.500"><path d="M12 2h3l4 5-5 7 5 7-4 5h-3L1 14z" /><path d="M15 2l5 6 7 6-7 6-5 6M10 8l5 6-5 6M20 8l-5 6 5 6" /></g>,
  <><path d="M1 3h17l9 11-9 11H1l9-11zM10 3l8 11-8 11M27 14L5 25M14 8L5 25" stroke="#0c7be0" strokeWidth="1.500" /></>,
];

function Toggle({ on }) {
  return on ? (
    <div className="flex h-6 w-12 items-center rounded-full bg-[#2aac94] pl-[7px] text-[14px] text-[#1d3b35]">
      <T w={18}>On</T><div className="ml-1 size-3 rounded-full bg-[#242424]" />
    </div>
  ) : (
    <div className="flex h-6 w-12 items-center rounded-full border border-[#adadad] pl-1.5 text-[14px] text-[#adadad]">
      <div className="mr-1 size-3 rounded-full bg-[#adadad]" /><T w={19}>Off</T>
    </div>
  );
}

function VizPane() {
  return (
    <div className="flex h-[717px] w-[272px] shrink-0 flex-col border-x border-[#5e5e5e] text-[17.500px] text-[#f0f0f0]">
      <div className="flex h-[58px] items-center justify-between pl-3 pr-[15px]">
        <T w={148} className="text-[23px] font-semibold text-white">Visualizations</T>
        <Svg w={12} h={12}><path d="M1 .5L6 6l-5 5.500M6 .5L11 6l-5 5.500" stroke="#fff" strokeWidth="2" /></Svg>
      </div>
      <div className="flex h-[28px] items-center pl-3 text-[17px] font-semibold leading-6 text-white"><T w={92} className="-mt-1.5">Build visual</T></div>
      <div className="flex h-12 pl-3">
        <div className="size-12 rounded bg-[#292929] p-1.5">
          <Svg w={36} h={36}><path d="M0 1h29" strokeWidth="1.500" /><path d="M2 10h32v8H2zM2 26h32v8H2z" fill="#2aac94" strokeDasharray="3 2" strokeWidth="2" stroke="#ccc" transform="translate(0 -1)" /></Svg>
        </div>
        <Svg w={36} h={36} className="ml-[57px] mt-1.5"><path d="M6 35H1V1h15l10 11v2" strokeWidth="1.800" /><path d="M16 2v10h10z" fill="#fff" stroke="none" /><path d="M35 14L22 25M35 14c-3 6-7 11-10 14l-4-3c3-4 8-9 14-11zM21 26c-4 0-5 2-7 6l-6 2c6 2 15 1 16-5z" strokeWidth="1.600" /></Svg>
      </div>
      <svg width="270" height="20" viewBox="0 0 270 20" fill="none" stroke="#666" strokeWidth="1.500" className="block shrink-0"><path d="M0 18.500h24L36 7l12 11.500h222" /></svg>
      <div className="ml-4 mt-4 grid auto-rows-[42px] grid-cols-[repeat(6,42px)]">
        {gallery.map((g, i) => (
          <Svg key={i} w={28} h={28}><g strokeWidth="1.500">{g}</g></Svg>
        ))}
      </div>
      <div className="ml-[21px] mt-[10px] flex h-[31px] gap-[3px]">
        <div className="size-[3.500px] rounded-full bg-white" /><div className="size-[3.500px] rounded-full bg-white" /><div className="size-[3.500px] rounded-full bg-white" />
      </div>
      <div className="flex flex-1 border-t border-[#e8e8e8] pt-[3px]">
        <div className="w-[261px] overflow-hidden pl-[6px]">
          <div className="h-5 overflow-hidden rounded-b border border-t-0 border-dashed border-[#6e6e6e] pl-[14px]">
            <T w={161} className="-mt-[15px] h-5 leading-6">Add data fields here</T>
          </div>
          <div className="pl-[12px]">
            <T w={104} className="mt-[16px] font-semibold leading-6 text-white">Drill through</T>
            <div className="mt-[13px] flex h-6 items-center justify-between pr-6"><T w={99}>Cross-report</T><Toggle /></div>
            <div className="mt-4 flex h-6 items-center justify-between pr-6"><T w={111}>Keep all filters</T><Toggle on /></div>
          </div>
          <div className="mt-[15px] flex h-[38px] items-center rounded border border-dashed border-[#6e6e6e] bg-black pl-[12px]"><T w={226}>Add drill-through fields here</T></div>
        </div>
        <div className="mt-[49px] h-[147px] w-[9px] rounded-full bg-[#adadad]" />
      </div>
    </div>
  );
}

const fields = [
  ["c", "% Salary Com...", 122], ["c", "% Salary Com...", 122], ["s", "Bonus Pay", 81], ["", "Department", 95],
  ["c", "Employee Co...", 117], ["c", "Employee Co...", 117], ["", "Gender", 58], ["", "Location", 67],
  ["", "Name", 48], ["", "Rating", 51], ["m", "Salary", 47], ["f", "Salary Band", 92],
  ["f", "Salary Compli...", 122], ["c", "Total Bonus_N...", 125], ["s", "Total Pay", 70], ["c", "Total Salary_N...", 124],
];

function FieldIcon({ k }) {
  if (k === "c")
    return <Svg w={18} h={22}><rect x="1" y="1" width="16" height="20" rx="3" stroke="#fff" strokeWidth="1.600" /><rect x="4.500" y="4" width="9" height="4.500" rx="1" stroke="#fff" strokeWidth="1.300" /><g fill="#fff" stroke="none"><path d="M4 11h2v2H4zM8 11h2v2H8zM12 11h2v2h-2zM4 14.500h2v2H4zM8 14.500h2v2H8zM12 14.500h2v2h-2z" /><path d="M4 18h2v1H4zM8 18h2v1H8zM12 18h2v1h-2z" /></g></Svg>;
  if (k === "m") return <Svg w={18} h={20}><path d="M16 4V1H2l8 9-8 9h14v-3" stroke="#fff" strokeWidth="1.500" /></Svg>;
  if (k === "s")
    return <Svg w={18} h={22}><path d="M9 18H3c-1 0-2-1-2-2V3c0-1 1-2 2-2h12c1 0 2 1 2 2v4M6 1v17M6 6h11M12 1v5" stroke="#fff" strokeWidth="1.500" /><path d="M20 11v-2h-9l5 6-5 6h9v-2" stroke="#fff" strokeWidth="1.500" fill="#141414" /></Svg>;
  if (k === "f")
    return <Svg w={18} h={22}><path d="M6 18H3c-1 0-2-1-2-2V3c0-1 1-2 2-2h12c1 0 2 1 2 2v9M6 1v17M6 6h11M12 1v4" stroke="#fff" strokeWidth="1.500" /><text x="7" y="19" fill="#fff" stroke="none" fontSize="20" fontStyle="italic" fontFamily="Liberation Serif">f</text><path d="M14 14l5.500 7M19.500 14l-6 7" stroke="#fff" strokeWidth="1.700" /></Svg>;
  return <div className="w-[18px]" />;
}

function DataPane() {
  return (
    <div className="flex h-[717px] flex-1 flex-col pl-px text-[17.500px] text-[#f4f4f4]">
      <div className="flex h-[58px] items-center justify-between pl-[11px] pr-[15px]">
        <T w={50} className="text-[23px] font-semibold text-white">Data</T>
        <Svg w={12} h={12}><path d="M1 .5L6 6l-5 5.500M6 .5L11 6l-5 5.500" stroke="#fff" strokeWidth="2" /></Svg>
      </div>
      <div className="ml-[5px] mt-[10px] flex h-9 w-[258px] items-center rounded border border-[#757575] bg-[#232323] pl-[18px] text-xl text-[#9a9a9a]">
        <Svg w={22} h={22}><circle cx="9" cy="9" r="8" strokeWidth="1.500" /><path d="M14.500 15l6.500 6.500" strokeWidth="1.500" /></Svg>
        <T w={61} className="ml-2.5 mt-0.5">Search</T>
      </div>
      <div className="mt-3 flex flex-1">
        <div className="w-[250px]">
          <div className="flex h-3 overflow-hidden pl-[43px]">
            <Svg w={18} h={16} className="-mt-[13px]"><path d="M1 0v12c0 2 1 3 3 3h10c2 0 3-1 3-3V0M6 7v8M12 7v8M1 7h16" stroke="#fff" strokeWidth="1.500" /></Svg>
            <T w={177} className="-mt-[18px] ml-[9px] h-6 leading-6">Palmoria Group emp...</T>
          </div>
          {fields.map(([k, n, w], i) => (
            <div key={i} className="flex h-9 items-center pl-[65px]">
              <div className="mr-3 size-[18px] shrink-0 rounded-[3px] border border-[#b5b5b5]" />
              <FieldIcon k={k} />
              <T w={w} className="ml-[9px]">{n}</T>
            </div>
          ))}
        </div>
        <div className="ml-px mt-[172px] h-[417px] w-3 bg-[#8a8886]" />
      </div>
    </div>
  );
}

function StatusBar() {
  return (
    <div className="flex h-9 items-center border-b border-t border-b-black border-t-[#666] text-[17.500px] leading-9 text-[#cfcfcf]">
      <T w={89} className="ml-[6px] mt-0.5">Page 3 of 4</T>
      <div className="ml-[1220px] h-[2px] w-[6px] bg-[#cfcfcf]" />
      <svg width="151" height="18" className="ml-[7px] shrink-0"><path d="M0 9.500h151" stroke="#d5d5d5" /><path d="M38 1h6v17h-6zM74 5h1.500v9H74z" fill="#d5d5d5" /></svg>
      <Svg w={11} h={11} className="ml-[8px]"><path d="M5.500 0v11M0 5.500h11" /></Svg>
      <T w={34} className="-mt-px ml-[20px]">60%</T>
      <Svg w={22} h={16} className="ml-[30px]"><rect x="1" y="1" width="20" height="14" rx="2" strokeWidth="1.700" /><path d="M8 4.500H5v2.500M14 4.500h3v2.500M8 11.500H5V9M14 11.500h3V9" strokeWidth="1.500" /></Svg>
      <T w={288} className="ml-[22px] mt-0.5">Update available (click to download)</T>
    </div>
  );
}

/* ---------- taskbar ---------- */
const Office = ({ c, tag, t }) => (
  <Svg w={36} h={36}>
    <g stroke="none">
      <path d="M8 4a2 2 0 0 1 2-2h24a2 2 0 0 1 2 2v6H8z" fill={c[0]} />
      <path d="M8 10h28v8H8z" fill={c[1]} /><path d="M8 18h28v8H8z" fill={c[2]} />
      <path d="M8 26h28v6a2 2 0 0 1-2 2H10a2 2 0 0 1-2-2z" fill={c[3]} />
      <rect x="0" y="9" width="19" height="18" rx="2" fill={tag} />
      <text x="9.500" y="23.500" textAnchor="middle" fill="#fff" fontSize="15" fontWeight="700" textLength={t === "W" ? 13 : 9} lengthAdjust="spacingAndGlyphs">{t}</text>
    </g>
  </Svg>
);

const tasks = [
  <Svg w={36} h={36}><defs><linearGradient id="tv" x2="1" y2="1"><stop stopColor="#fff" /><stop offset="1" stopColor="#ddd" /></linearGradient></defs><g stroke="none"><rect x="0" y="10" width="27" height="24" rx="2" fill="#2b2b2b" /><rect x="9" y="1" width="27" height="24" rx="2" fill="url(#tv)" /><path d="M9 10h18v15H11a2 2 0 0 1-2-2z" fill="#a9a9a9" /></g></Svg>,
  <Svg w={36} h={36} vb="0 0 48 48"><CopilotMark id="tc" /></Svg>,
  <Svg w={36} h={36}><g stroke="none"><path d="M0 4a2 2 0 0 1 2-2h10l4 4h18a2 2 0 0 1 2 2v10H0z" fill="#dd9a05" /><path d="M0 10h12l4-3h18a2 2 0 0 1 2 2v23a2 2 0 0 1-2 2H2a2 2 0 0 1-2-2z" fill="#ffd04b" /><path d="M6 34V27a4 4 0 0 1 4-4h16a4 4 0 0 1 4 4v7z" fill="#1279cf" /><path d="M11 29h14" stroke="#0a5294" strokeWidth="2" /></g></Svg>,
  <Svg w={36} h={36}><defs><linearGradient id="eg" x1="0" x2="1" y2=".5"><stop stopColor="#1c9de0" /><stop offset=".5" stopColor="#30c6d8" /><stop offset="1" stopColor="#6fe04a" /></linearGradient></defs><g stroke="none"><path d="M1 16C2 6 9 0 18 0c11 0 18 8 18 15 0 6-4 9-9 9-4 0-6-2-6-3s2-2 2-5c0-4-4-7-9-7C8 9 2 12 1 16z" fill="url(#eg)" /><path d="M0 20C1 12 7 9 13 9c6 0 10 4 10 7-1-2-3-3-5-3-5 0-8 5-8 10 0 7 6 12 12 13C10 38-1 31 0 20z" fill="#0b7fd8" /><path d="M13 19c-3 9 5 16 14 14 3-1 6-4 7-6-8 4-19 1-21-8z" fill="#0f4f9e" /></g></Svg>,
  <Svg w={36} h={36}><g stroke="none"><path d="M9 6V2h18v4" stroke="#33b6f0" strokeWidth="2.500" /><path d="M0 6h36v26a4 4 0 0 1-4 4H4a4 4 0 0 1-4-4z" fill="#1d4377" /><path d="M10 13h7.500v7H10z" fill="#f25022" /><path d="M18.500 13H26v7h-7.500z" fill="#7fba00" /><path d="M10 21h7.500v7H10z" fill="#00a4ef" /><path d="M18.500 21H26v7h-7.500z" fill="#ffb900" /></g></Svg>,
  <Office c={["#41a5ee", "#2b7cd3", "#185abd", "#103f91"]} tag="#1a56bb" t="W" />,
  <Office c={["#2bb673", "#21a366", "#107c41", "#185c37"]} tag="#107c41" t="X" />,
  <Svg w={36} h={36}><g stroke="none"><circle cx="18" cy="18" r="18" fill="#fbc116" /><path d="M18 18L2.400 9A18 18 0 0 1 33.600 9H18z" fill="#e33b2e" /><path d="M18 18L2.400 9A18 18 0 0 0 18 36l8-14z" fill="#2ba24c" /><path d="M2.400 9L10 22l8-13h15.600A18 18 0 0 0 2.400 9z" fill="#e33b2e" /><circle cx="18" cy="18" r="9" fill="#fff" /><circle cx="18" cy="18" r="7.200" fill="#2f7de9" /></g></Svg>,
  <div className="relative">
    <Svg w={36} h={36}><path d="M2 34l2.500-9A16 16 0 1 1 11 31.500z" stroke="#1f9156" strokeWidth="3" /><path d="M10 12c2-4 4-3 5 0l1 2-2 3c2 3 4 5 7 6l3-2 4 2c1 3-3 5-6 4-6-1-13-9-12-15z" fill="#1f9156" stroke="none" /></Svg>
    <div className="absolute -top-[7px] left-[18px] flex h-6 w-7 items-center justify-center rounded-full bg-[#0a78d4] text-base text-white"><T w={16}>17</T></div>
  </div>,
];

function Taskbar() {
  return (
    <div className="flex h-[72px] border-t-2 border-[#bfb29c] bg-[linear-gradient(90deg,#efe0bb_0%,#f0e1c2_18%,#f4e2d0_45%,#f3e4cb_75%,#efdfba_100%)] text-[#1b1b1b]">
      <div className="w-[434px] shrink-0 pl-[33px] pt-[20px]">
        <div className="relative size-[30px] rounded-full bg-[linear-gradient(135deg,#eab32c,#f4650c)]">
          <div className="absolute -top-[12px] left-[9px] flex h-6 w-9 items-center justify-center rounded-full bg-[#fbf6ec] text-base"><T w={24}>27°</T></div>
        </div>
      </div>
      <Svg w={35} h={35} className="mt-[17px]"><defs><linearGradient id="wn" x2="1" y2="1"><stop stopColor="#4fd0fc" /><stop offset="1" stopColor="#0473d4" /></linearGradient></defs><path d="M0 1a1 1 0 0 1 1-1h15.500v16.500H0zM18 0h16a1 1 0 0 1 1 1v15.500H18zM0 18h16.500v17H1a1 1 0 0 1-1-1zM18 18h17v16a1 1 0 0 1-1 1H18z" fill="url(#wn)" stroke="none" /></Svg>
      <div className="ml-[21px] mt-[11px] flex h-[46px] w-[328px] shrink-0 items-center rounded-full border border-[#e2d3bf] bg-[#fbf6f0] pl-4 text-[18.500px] text-[#5c5a57] shadow-sm">
        <Svg w={22} h={22}><circle cx="10" cy="9.500" r="8" stroke="#1b1b1b" strokeWidth="2.300" /><path d="M15.500 15.500l5 5.500" stroke="#1b1b1b" strokeWidth="3" /></Svg>
        <T w={61} className="ml-4">Search</T>
        <Svg w={76} h={38} className="ml-auto mr-[3px]">
          <g stroke="none">
            <path d="M60 36l2-14c5 3 7 9 7 14z" fill="#14508f" />
            <path d="M24 36c3-4 2-10 3-12h31c1 4 1 8 4 12z" fill="#a87a60" />
            <path d="M33 36l2-12h6l-3 12zM50 36l-1-11h5l4 11z" fill="#d3a184" />
            <path d="M25 24c6-4 30-4 36 0-6 3-30 3-36 0z" fill="#2d7253" />
          </g>
          <g stroke="#d0a593" strokeWidth="2"><path d="M17 36c0-12-1-14-7-22M19 36c1-14 2-18 6-25M59 30c0-8-2-12-7-18M61 32c1-10 2-14 6-21" /><path d="M14 36c1-10-1-12 0-22M21 36c0-10 7-14 10-24M64 34c0-10 4-14 6-22" strokeWidth="1.300" /></g>
          <g fill="#77873c" stroke="none"><ellipse cx="8" cy="12" rx="7.500" ry="5" /><ellipse cx="26" cy="9" rx="11" ry="6" /><ellipse cx="51" cy="10" rx="6.500" ry="5" /><ellipse cx="66" cy="7" rx="8" ry="5" /></g>
          <g fill="#b5a548" stroke="none"><ellipse cx="7" cy="9.500" rx="5" ry="3" /><ellipse cx="25" cy="5.500" rx="7" ry="3" /><ellipse cx="50" cy="8" rx="4.500" ry="2.500" /><ellipse cx="65" cy="4.500" rx="5" ry="2.500" /></g>
        </Svg>
      </div>
      <div className="ml-1 flex">
        {tasks.map((t, i) => (
          <div key={i} className="flex w-[66px] shrink-0 flex-col items-center pt-[16px]">
            {t}
            {i === 2 && <div className="mt-[6px] h-[5px] w-[9px] rounded-full bg-[#87806f]" />}
          </div>
        ))}
        <div className="ml-[5px] mt-[6px] flex h-14 w-14 flex-col items-center rounded-md border border-[#efe2d2] bg-[#fbf3e8] pt-[9px] shadow-sm">
          <Svg w={27} h={36}>
            <defs><linearGradient id="pb" y2="1" x2="0"><stop stopColor="#e8b013" /><stop offset="1" stopColor="#c97c0c" /></linearGradient></defs>
            <g stroke="none"><rect x="15" y="0" width="12" height="36" rx="1.500" fill="url(#pb)" /><rect x="8" y="9" width="12" height="27" rx="1.500" fill="#eebf2c" /><rect x="0" y="18" width="12" height="18" rx="1.500" fill="#f7dc70" /></g>
          </Svg>
          <div className="mt-[6px] h-[5px] w-6 shrink-0 rounded-full bg-[#0a78d4]" />
        </div>
      </div>
      <div className="ml-[108px] mt-[22px] flex h-6 items-center text-[#1b1b1b]">
        <Svg w={16} h={10}><path d="M.7 9L8 1.500 15.300 9" stroke="#1b1b1b" strokeWidth="1.700" /></Svg>
        <Svg w={24} h={20} className="ml-7"><path d="M6 18a5 5 0 0 1-1-9.500C6 1 16 1 18 7c6 0 7 10 1 11z" fill="#bdbdbd" stroke="#222" strokeWidth="1.500" /><path d="M4 1l19 19" stroke="#222" strokeWidth="1.800" /></Svg>
        <Svg w={24} h={18} className="ml-6"><path d="M1 7c7-8 15-8 22 0M4.500 10.500c5-5 10-5 15 0M8 14c3-3 5-3 8 0" stroke="#1b1b1b" strokeWidth="1.600" /><circle cx="12" cy="16" r="2" fill="#1b1b1b" stroke="none" /></Svg>
        <Svg w={24} h={20} className="ml-3"><path d="M1 7h4l6-5v16l-6-5H1zM14 7c2 2 2 4 0 6M17 4c4 4 4 8 0 12M20 1c5 6 5 12 0 18" stroke="#1b1b1b" strokeWidth="1.500" /></Svg>
        <Svg w={24} h={16} className="ml-3"><rect x="1" y="1" width="20" height="14" rx="3" stroke="#1b1b1b" strokeWidth="1.500" /><path d="M3.500 3.500h10v9h-10zM22 5.500h2v5h-2z" fill="#1b1b1b" stroke="none" /></Svg>
      </div>
      <div className="ml-auto mr-[29px] mt-[9px] flex flex-col items-end text-[16.500px] leading-6"><T w={43}>18:59</T><T w={93}>18/07/2025</T></div>
    </div>
  );
}

export default function App() {
  return (
    <div className="flex h-[1080px] w-[1920px] flex-col overflow-hidden bg-[#141414] font-['Open_Sans','Noto_Sans',sans-serif]">
      <TitleBar />
      <Menu />
      <Ribbon />
      <div className="flex h-[717px]">
        <Rail />
        <div className="w-[1317px] shrink-0">
          <Canvas />
          <TabBar />
        </div>
        <VizPane />
        <DataPane />
      </div>
      <StatusBar />
      <Taskbar />
    </div>
  );
}
